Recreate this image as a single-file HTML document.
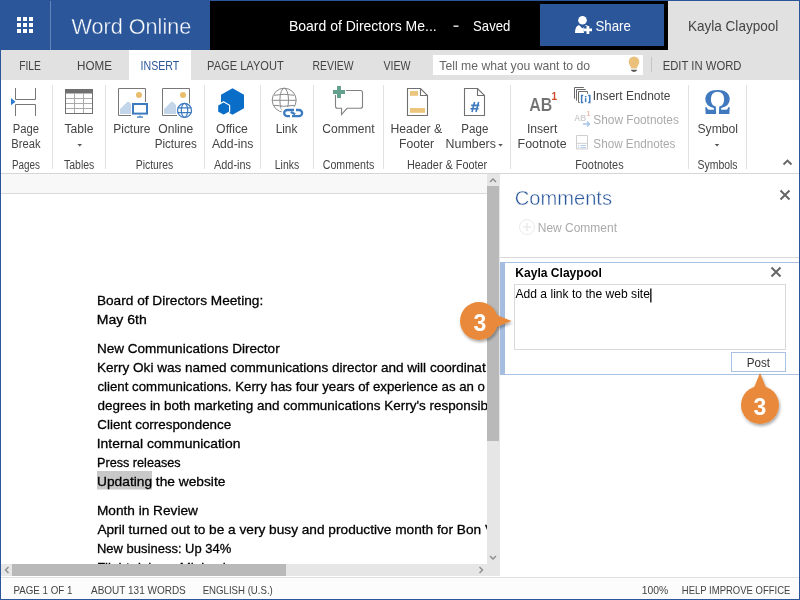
<!DOCTYPE html>
<html><head><meta charset="utf-8"><style>
html,body{margin:0;padding:0;width:800px;height:600px;overflow:hidden;background:#fff}
svg{display:block;will-change:transform}
text{font-family:"Liberation Sans",sans-serif;white-space:pre}
</style></head><body>
<svg width="800" height="600" viewBox="0 0 800 600">
<defs><clipPath id="doc"><rect x="1" y="194" width="486" height="370"/></clipPath>
<filter id="sh" x="-30%" y="-30%" width="160%" height="160%"><feDropShadow dx="1" dy="2" stdDeviation="1.5" flood-color="#000" flood-opacity="0.35"/></filter>
</defs>
<!-- header -->
<rect x="0" y="0" width="800" height="50" fill="#2b579a"/>
<rect x="210" y="1" width="458" height="49" fill="#000"/>
<rect x="540" y="4" width="124" height="42" fill="#2b579a"/>
<rect x="668" y="1" width="131" height="49" fill="#e1e1e1"/>
<g fill="#fff">
<rect x="17" y="17" width="4" height="4"/><rect x="23" y="17" width="4" height="4"/><rect x="29" y="17" width="4" height="4"/>
<rect x="17" y="23" width="4" height="4"/><rect x="23" y="23" width="4" height="4"/><rect x="29" y="23" width="4" height="4"/>
<rect x="17" y="29" width="4" height="4"/><rect x="23" y="29" width="4" height="4"/><rect x="29" y="29" width="4" height="4"/>
</g>
<rect x="50" y="1" width="1" height="49" fill="#6384bb"/>
<rect x="453.5" y="25.5" width="5" height="1.3" fill="#fff"/>
<!-- share person icon -->
<circle cx="582.5" cy="20.3" r="4.3" fill="#fff"/>
<path d="M575 32.8 C575 28.5 576.3 25.8 579 25 L582.5 28.6 L586 25 C587.5 25.4 588.6 26.5 589 28 L588 33 H575 Z" fill="#fff"/>
<path d="M586.6 26 V34 M583.8 29.9 H592" stroke="#2b579a" stroke-width="5"/>
<path d="M587.9 26 V34 M583.8 29.9 H592" stroke="#fff" stroke-width="2.7"/>
<!-- tab bar -->
<rect x="1" y="50" width="798" height="30" fill="#e1e1e1"/>
<rect x="129" y="50" width="62" height="30" fill="#fff"/>
<rect x="433" y="55" width="210" height="20" fill="#fff"/>
<g fill="#eac07a"><circle cx="634" cy="61.8" r="5.3"/><path d="M629.6 64.6 L638.4 64.6 L636.6 68.6 L631.4 68.6 Z"/></g>
<path d="M630.8 69.8 H637.2 Q636.8 71.9 634 71.9 Q631.2 71.9 630.8 69.8 Z" fill="#555"/>
<rect x="651" y="57" width="1" height="15" fill="#c6c6c6"/>
<!-- ribbon -->
<rect x="1" y="80" width="798" height="93" fill="#fff"/>
<rect x="1" y="173" width="798" height="1" fill="#d6d6d6"/>
<g fill="#e1e1e1">
<rect x="52" y="85" width="1" height="84"/><rect x="105" y="85" width="1" height="84"/><rect x="204" y="85" width="1" height="84"/>
<rect x="260" y="85" width="1" height="84"/><rect x="313" y="85" width="1" height="84"/><rect x="383" y="85" width="1" height="84"/>
<rect x="510" y="85" width="1" height="84"/><rect x="688" y="85" width="1" height="84"/><rect x="746" y="85" width="1" height="84"/>
</g>
<!-- page break icon -->
<g fill="none" stroke="#777" stroke-width="1">
<path d="M15.5 88 V99.5 H35.5 V88"/><path d="M15.5 116 V104.5 H35.5 V116"/>
</g>
<path d="M11 98 L15.5 101.7 L11 105.3 Z" fill="#2b7bd0"/>
<!-- table icon -->
<rect x="65.5" y="89.5" width="27" height="24" fill="none" stroke="#707070"/>
<rect x="65" y="89" width="28" height="4.5" fill="#707070"/>
<g stroke="#aaa" stroke-width="1"><path d="M74.5 93.5 V113 M83.5 93.5 V113 M66 98.5 H92 M66 103.5 H92 M66 108.5 H92"/></g>
<path d="M77.5 144 H82 L79.75 146.5 Z" fill="#555"/>
<!-- picture icon -->
<path d="M118.5 115.5 V88.5 H145.5 V102 M118.5 115.5 H131" fill="none" stroke="#777"/>
<circle cx="139" cy="95" r="3" fill="#e9bd6c"/>
<path d="M120 114 V109 L127.5 101.8 L128.8 101.8 L131 104 V114 Z" fill="#c3d5e9"/>
<rect x="133" y="104" width="14" height="9.6" fill="#fff" stroke="#3d7bbf" stroke-width="2"/>
<rect x="137" y="116.4" width="6" height="1.3" fill="#3d7bbf"/><rect x="139.3" y="115.6" width="1.4" height="1" fill="#3d7bbf"/>
<!-- online pictures icon -->
<path d="M162.5 115.5 V88.5 H189.5 V103.5 M162.5 115.5 H177" fill="none" stroke="#777"/>
<circle cx="183" cy="95" r="3" fill="#e9bd6c"/>
<path d="M164 114 V109 L171.5 101.8 L172.8 101.8 L176 105 V114 Z" fill="#c3d5e9"/>
<circle cx="184.5" cy="110.4" r="7" fill="#fff" stroke="#3d7bbf" stroke-width="1.3"/>
<path d="M177.5 107.8 H191.5 M177.5 112.6 H191.5" stroke="#3d7bbf" stroke-width="1.2" fill="none"/>
<ellipse cx="184.5" cy="110.4" rx="3.2" ry="7" fill="none" stroke="#3d7bbf" stroke-width="1.2"/>
<!-- office add-ins -->
<path d="M232.5 88.3 L244 94.8 V108.3 L232.5 114.8 L221 108.3 V94.8 Z" fill="#0a6ec8"/>
<path d="M223.6 101.8 L229.6 105.3 V111.9 L223.6 115.3 L217.6 111.9 V105.3 Z" fill="#0a6ec8" stroke="#fff" stroke-width="1.2"/>
<!-- link globe -->
<g fill="none" stroke="#8a8a8a" stroke-width="1">
<circle cx="284.2" cy="100.2" r="12"/>
<ellipse cx="284.2" cy="100.2" rx="4.3" ry="12"/>
<path d="M272.2 100.3 H296.2 M274 95.3 Q284.2 93.3 294.4 95.3 M274 105.3 Q284.2 107.3 294.4 105.3"/>
</g>
<path d="M281.5 107 H304 V119 H281.5 Z" fill="#fff"/>
<g fill="none" stroke="#3d7bbf" stroke-width="2.3">
<path d="M294 110 H287.3 A3.1 3.1 0 0 0 287.3 116.2 H290"/>
<path d="M296 110 H299 A3.1 3.1 0 0 1 299 116.2 H292"/>
<path d="M290.8 112 L295.2 114.2"/>
</g>
<!-- comment icon -->
<path d="M346 90.5 H360.5 Q362.5 90.5 362.5 92.5 V106.3 Q362.5 108.3 360.5 108.3 H347 L341.5 114.5 V108.3 H337.5 Q335.5 108.3 335.5 106.3 V95" fill="none" stroke="#808080" stroke-width="1.1"/>
<path d="M337 86 H341 V90 H345 V94 H341 V98 H337 V94 H333 V90 H337 Z" fill="#64a08e"/>
<!-- header & footer -->
<path d="M407.5 88.5 H420.5 L427.5 95.5 V115.5 H407.5 Z M420.5 88.5 V95.5 H427.5" fill="none" stroke="#707070" stroke-width="1.1"/>
<rect x="410" y="91" width="8" height="4.8" fill="#ecc57c"/>
<rect x="410" y="108" width="15" height="4.8" fill="#ecc57c"/>
<!-- page numbers -->
<path d="M464.5 88.5 H477.5 L484.5 95.5 V115.5 H464.5 Z M477.5 88.5 V95.5 H484.5" fill="none" stroke="#707070" stroke-width="1.1"/>
<path d="M474.6 102 L472 112 M478.6 102 L476 112 M471.2 105.4 H479.3 M470.4 108.8 H478.5" fill="none" stroke="#3d7bbf" stroke-width="1.6"/>
<path d="M498.2 144 H502.8 L500.5 146.5 Z" fill="#555"/>
<!-- AB1 -->
<text x="529.3" y="110.7" font-size="18.5" font-weight="bold" fill="#707070" textLength="23" lengthAdjust="spacingAndGlyphs" stroke="#fff" stroke-width="0.2">AB</text>
<text x="551.5" y="99.8" font-size="10" font-weight="bold" fill="#d04a2a">1</text>
<!-- insert endnote icon -->
<g fill="none" stroke="#6a6a6a" stroke-width="1">
<path d="M574.5 98.7 V87.5 H583.8"/><path d="M576.5 100.7 V89.5 H585.8"/><path d="M579.8 102.5 H578.5 V91.5 H587.5 V93.8"/>
</g>
<g fill="none" stroke="#3d7bbf" stroke-width="1.5">
<path d="M583.2 95.6 H581.6 V102.4 H583.2"/><path d="M588.2 95.6 H589.8 V102.4 H588.2"/>
</g>
<rect x="584.9" y="96" width="1.5" height="1.4" fill="#3d7bbf"/><rect x="584.9" y="98.2" width="1.5" height="3.8" fill="#3d7bbf"/>
<!-- show footnotes (disabled) -->
<text x="574.2" y="121.2" font-size="9.4" font-weight="bold" fill="#d0d0d0" textLength="12" lengthAdjust="spacingAndGlyphs">AB</text>
<text x="586.8" y="115.8" font-size="6.3" font-weight="bold" fill="#f0b4a4">1</text>
<path d="M583 124 H589.5 M587 121.5 L589.5 124 L587 126.5" fill="none" stroke="#a8c4e6" stroke-width="1.4"/>
<!-- show endnotes (disabled) -->
<path d="M576.5 135.5 H587.5 V149 H576.5 Z M576.5 143.3 H587.5" fill="none" stroke="#cfcfcf"/>
<path d="M580.5 145.6 H586 M580.5 147.6 H586 M578 145.6 H579 M578 147.6 H579" stroke="#a8c4e6" stroke-width="0.9"/>
<!-- omega -->
<text x="717.4" y="114" font-size="36" style="font-family:'Liberation Serif',serif" font-weight="bold" fill="#4079bd" text-anchor="middle" textLength="27.5" lengthAdjust="spacingAndGlyphs">Ω</text>
<path d="M714.7 144 H719.3 L717 146.5 Z" fill="#555"/>
<path d="M783.5 164.5 L787.5 160.5 L791.5 164.5" fill="none" stroke="#666" stroke-width="1.9"/>
<!-- doc area -->
<rect x="1" y="174" width="486" height="19" fill="#f8f8f8"/>
<rect x="1" y="193" width="486" height="1" fill="#dadada"/>
<rect x="487" y="174" width="13" height="390" fill="#e6e6e6"/>
<rect x="487" y="186" width="12" height="255" fill="#b9b9b9"/>
<path d="M490 182 L493 179 L496 182" fill="none" stroke="#8c8c8c" stroke-width="1.4"/>
<path d="M490 556 L493 559 L496 556" fill="none" stroke="#8c8c8c" stroke-width="1.4"/>
<rect x="1" y="564" width="499" height="12" fill="#e6e6e6"/>
<rect x="12" y="564" width="274" height="12" fill="#b9b9b9"/>
<path d="M8.5 567 L5.5 570 L8.5 573" fill="none" stroke="#8c8c8c" stroke-width="1.4"/>
<path d="M479.5 567 L482.5 570 L479.5 573" fill="none" stroke="#8c8c8c" stroke-width="1.4"/>
<!-- highlight -->
<rect x="97" y="471" width="55" height="18.5" fill="#c8c8c8"/>
<!-- status bar -->
<rect x="1" y="577" width="798" height="1" fill="#e0e0e0"/>
<rect x="1" y="578" width="798" height="21" fill="#fcfcfc"/>
<!-- panel -->
<rect x="500" y="257" width="299" height="1" fill="#d9d9d9"/>
<rect x="500" y="262" width="299" height="1" fill="#a9c1e3"/>
<rect x="500" y="374" width="299" height="1" fill="#a9c1e3"/>
<rect x="500" y="262" width="5" height="113" fill="#a4bde0"/>
<rect x="514.5" y="284.5" width="271" height="65" fill="#fff" stroke="#d9d9d9"/>
<rect x="650" y="288.5" width="1.6" height="14" fill="#333"/>
<rect x="731.5" y="352.5" width="54" height="19" fill="#fff" stroke="#a9c1e3"/>
<g stroke="#666" stroke-width="2"><path d="M771.5 267.5 L780.5 276.5 M780.5 267.5 L771.5 276.5"/></g>
<g stroke="#666" stroke-width="2"><path d="M780.5 190.5 L789.5 199.5 M789.5 190.5 L780.5 199.5"/></g>
<circle cx="527" cy="227" r="7.5" fill="none" stroke="#eaeaea" stroke-width="1"/>
<path d="M527 223 V231 M523 227 H531" stroke="#ececec" stroke-width="1.6"/>
<!-- window border -->
<rect x="0.5" y="0.5" width="799" height="599" fill="none" stroke="#2b579a"/>

<text x="71.50" y="34" font-size="22.5" fill="#fff" font-weight="normal" textLength="119.78" lengthAdjust="spacingAndGlyphs" stroke="#2b579a" stroke-width="0.4">Word Online</text>
<text x="288.88" y="31" font-size="15" fill="#fff" font-weight="normal" textLength="147.85" lengthAdjust="spacingAndGlyphs">Board of Directors Me...</text>
<text x="473.07" y="31" font-size="15" fill="#fff" font-weight="normal" textLength="37.26" lengthAdjust="spacingAndGlyphs">Saved</text>
<text x="595.47" y="31" font-size="15" fill="#fff" font-weight="normal" textLength="35.41" lengthAdjust="spacingAndGlyphs">Share</text>
<text x="687.92" y="31" font-size="14.5" fill="#444" font-weight="normal" textLength="90.43" lengthAdjust="spacingAndGlyphs">Kayla Claypool</text>
<text x="19.18" y="70" font-size="13" fill="#444" font-weight="normal" textLength="21.70" lengthAdjust="spacingAndGlyphs">FILE</text>
<text x="77.07" y="70" font-size="13" fill="#444" font-weight="normal" textLength="34.96" lengthAdjust="spacingAndGlyphs">HOME</text>
<text x="207.11" y="70" font-size="13" fill="#444" font-weight="normal" textLength="76.62" lengthAdjust="spacingAndGlyphs">PAGE LAYOUT</text>
<text x="312.57" y="70" font-size="13" fill="#444" font-weight="normal" textLength="40.97" lengthAdjust="spacingAndGlyphs">REVIEW</text>
<text x="383.40" y="70" font-size="13" fill="#444" font-weight="normal" textLength="27.13" lengthAdjust="spacingAndGlyphs">VIEW</text>
<text x="662.70" y="70" font-size="13" fill="#444" font-weight="normal" textLength="78.77" lengthAdjust="spacingAndGlyphs">EDIT IN WORD</text>
<text x="140.55" y="70" font-size="13" fill="#2b579a" font-weight="normal" textLength="38.67" lengthAdjust="spacingAndGlyphs">INSERT</text>
<text x="439.36" y="70" font-size="13" fill="#666" font-weight="normal" textLength="150.69" lengthAdjust="spacingAndGlyphs">Tell me what you want to do</text>
<text x="12.80" y="133" font-size="12" fill="#444" font-weight="normal" textLength="26.31" lengthAdjust="spacingAndGlyphs">Page</text>
<text x="11.30" y="147.5" font-size="12" fill="#444" font-weight="normal" textLength="29.28" lengthAdjust="spacingAndGlyphs">Break</text>
<text x="11.91" y="168.6" font-size="12" fill="#444" font-weight="normal" textLength="27.99" lengthAdjust="spacingAndGlyphs">Pages</text>
<text x="64.46" y="133" font-size="12" fill="#444" font-weight="normal" textLength="28.98" lengthAdjust="spacingAndGlyphs">Table</text>
<text x="63.99" y="168.6" font-size="12" fill="#444" font-weight="normal" textLength="30.32" lengthAdjust="spacingAndGlyphs">Tables</text>
<text x="113.24" y="133" font-size="12" fill="#444" font-weight="normal" textLength="37.29" lengthAdjust="spacingAndGlyphs">Picture</text>
<text x="158.32" y="133" font-size="12" fill="#444" font-weight="normal" textLength="34.92" lengthAdjust="spacingAndGlyphs">Online</text>
<text x="154.67" y="147.5" font-size="12" fill="#444" font-weight="normal" textLength="42.18" lengthAdjust="spacingAndGlyphs">Pictures</text>
<text x="135.77" y="168.6" font-size="12" fill="#444" font-weight="normal" textLength="37.54" lengthAdjust="spacingAndGlyphs">Pictures</text>
<text x="216.11" y="133" font-size="12" fill="#444" font-weight="normal" textLength="31.83" lengthAdjust="spacingAndGlyphs">Office</text>
<text x="211.90" y="147.5" font-size="12" fill="#444" font-weight="normal" textLength="41.47" lengthAdjust="spacingAndGlyphs">Add-ins</text>
<text x="214.00" y="168.6" font-size="12" fill="#444" font-weight="normal" textLength="36.93" lengthAdjust="spacingAndGlyphs">Add-ins</text>
<text x="275.65" y="133" font-size="12" fill="#444" font-weight="normal" textLength="21.73" lengthAdjust="spacingAndGlyphs">Link</text>
<text x="274.77" y="168.6" font-size="12" fill="#444" font-weight="normal" textLength="24.35" lengthAdjust="spacingAndGlyphs">Links</text>
<text x="322.19" y="133" font-size="12" fill="#444" font-weight="normal" textLength="52.48" lengthAdjust="spacingAndGlyphs">Comment</text>
<text x="322.77" y="168.6" font-size="12" fill="#444" font-weight="normal" textLength="51.45" lengthAdjust="spacingAndGlyphs">Comments</text>
<text x="390.52" y="133" font-size="12" fill="#444" font-weight="normal" textLength="51.56" lengthAdjust="spacingAndGlyphs">Header &amp;</text>
<text x="399.03" y="147.5" font-size="12" fill="#444" font-weight="normal" textLength="35.13" lengthAdjust="spacingAndGlyphs">Footer</text>
<text x="461.37" y="133" font-size="12" fill="#444" font-weight="normal" textLength="27.05" lengthAdjust="spacingAndGlyphs">Page</text>
<text x="445.61" y="147.5" font-size="12" fill="#444" font-weight="normal" textLength="50.26" lengthAdjust="spacingAndGlyphs">Numbers</text>
<text x="406.93" y="168.6" font-size="12" fill="#444" font-weight="normal" textLength="80.21" lengthAdjust="spacingAndGlyphs">Header &amp; Footer</text>
<text x="526.91" y="133" font-size="12" fill="#444" font-weight="normal" textLength="30.37" lengthAdjust="spacingAndGlyphs">Insert</text>
<text x="517.60" y="147.5" font-size="12" fill="#444" font-weight="normal" textLength="49.15" lengthAdjust="spacingAndGlyphs">Footnote</text>
<text x="575.13" y="168.6" font-size="12" fill="#444" font-weight="normal" textLength="48.50" lengthAdjust="spacingAndGlyphs">Footnotes</text>
<text x="697.41" y="133" font-size="12" fill="#444" font-weight="normal" textLength="40.65" lengthAdjust="spacingAndGlyphs">Symbol</text>
<text x="697.48" y="168.6" font-size="12" fill="#444" font-weight="normal" textLength="40.13" lengthAdjust="spacingAndGlyphs">Symbols</text>
<text x="592.72" y="99.8" font-size="12" fill="#444" font-weight="normal" textLength="77.71" lengthAdjust="spacingAndGlyphs">Insert Endnote</text>
<text x="593.33" y="124" font-size="12" fill="#aaa" font-weight="normal" textLength="85.53" lengthAdjust="spacingAndGlyphs">Show Footnotes</text>
<text x="593.33" y="148" font-size="12" fill="#aaa" font-weight="normal" textLength="81.92" lengthAdjust="spacingAndGlyphs">Show Endnotes</text>
<text x="96.91" y="305" font-size="13.6" fill="#000" font-weight="normal" textLength="166.29" lengthAdjust="spacingAndGlyphs" clip-path="url(#doc)" stroke="#000" stroke-width="0.3">Board of Directors Meeting:</text>
<text x="96.88" y="324" font-size="13.6" fill="#000" font-weight="normal" textLength="49.91" lengthAdjust="spacingAndGlyphs" clip-path="url(#doc)" stroke="#000" stroke-width="0.3">May 6th</text>
<text x="96.92" y="353" font-size="13.6" fill="#000" font-weight="normal" textLength="182.76" lengthAdjust="spacingAndGlyphs" clip-path="url(#doc)" stroke="#000" stroke-width="0.3">New Communications Director</text>
<text x="96.92" y="372" font-size="13.6" fill="#000" font-weight="normal" textLength="388.76" lengthAdjust="spacingAndGlyphs" clip-path="url(#doc)" stroke="#000" stroke-width="0.3">Kerry Oki was named communications director and will coordinat</text>
<text x="97.47" y="391" font-size="13.6" fill="#000" font-weight="normal" textLength="387.52" lengthAdjust="spacingAndGlyphs" clip-path="url(#doc)" stroke="#000" stroke-width="0.3">client communications. Kerry has four years of experience as an o</text>
<text x="97.46" y="410" font-size="13.6" fill="#000" font-weight="normal" textLength="393.45" lengthAdjust="spacingAndGlyphs" clip-path="url(#doc)" stroke="#000" stroke-width="0.3">degrees in both marketing and communications Kerry's responsibi</text>
<text x="97.33" y="429" font-size="13.6" fill="#000" font-weight="normal" textLength="133.85" lengthAdjust="spacingAndGlyphs" clip-path="url(#doc)" stroke="#000" stroke-width="0.3">Client correspondence</text>
<text x="96.75" y="448" font-size="13.6" fill="#000" font-weight="normal" textLength="143.63" lengthAdjust="spacingAndGlyphs" clip-path="url(#doc)" stroke="#000" stroke-width="0.3">Internal communication</text>
<text x="96.99" y="467" font-size="13.6" fill="#000" font-weight="normal" textLength="83.69" lengthAdjust="spacingAndGlyphs" clip-path="url(#doc)" stroke="#000" stroke-width="0.3">Press releases</text>
<text x="97.04" y="486" font-size="13.6" fill="#000" font-weight="normal" textLength="128.36" lengthAdjust="spacingAndGlyphs" clip-path="url(#doc)" stroke="#000" stroke-width="0.3">Updating the website</text>
<text x="96.91" y="515" font-size="13.6" fill="#000" font-weight="normal" textLength="100.99" lengthAdjust="spacingAndGlyphs" clip-path="url(#doc)" stroke="#000" stroke-width="0.3">Month in Review</text>
<text x="97.40" y="534" font-size="13.6" fill="#000" font-weight="normal" textLength="433.10" lengthAdjust="spacingAndGlyphs" clip-path="url(#doc)" stroke="#000" stroke-width="0.3">April turned out to be a very busy and productive month for Bon Voyage</text>
<text x="96.96" y="553" font-size="13.6" fill="#000" font-weight="normal" textLength="134.42" lengthAdjust="spacingAndGlyphs" clip-path="url(#doc)" stroke="#000" stroke-width="0.3">New business: Up 34%</text>
<text x="96.93" y="572" font-size="13.6" fill="#000" font-weight="normal" textLength="128.91" lengthAdjust="spacingAndGlyphs" clip-path="url(#doc)" stroke="#000" stroke-width="0.3">Flight delays: Minimal</text>
<text x="514.79" y="204.7" font-size="20" fill="#2b579a" font-weight="normal" textLength="97.21" lengthAdjust="spacingAndGlyphs" stroke="#fff" stroke-width="0.4">Comments</text>
<text x="537.74" y="231.7" font-size="12" fill="#aaa" font-weight="normal" textLength="79.23" lengthAdjust="spacingAndGlyphs">New Comment</text>
<text x="515.28" y="276.7" font-size="12" fill="#000" font-weight="bold" textLength="86.54" lengthAdjust="spacingAndGlyphs">Kayla Claypool</text>
<text x="515.50" y="297.7" font-size="12.5" fill="#000" font-weight="normal" textLength="134.44" lengthAdjust="spacingAndGlyphs">Add a link to the web site</text>
<text x="746.67" y="367" font-size="12" fill="#333" font-weight="normal" textLength="23.31" lengthAdjust="spacingAndGlyphs">Post</text>
<text x="13.42" y="594" font-size="11.5" fill="#444" font-weight="normal" textLength="59.03" lengthAdjust="spacingAndGlyphs">PAGE 1 OF 1</text>
<text x="91.00" y="594" font-size="11.5" fill="#444" font-weight="normal" textLength="94.77" lengthAdjust="spacingAndGlyphs">ABOUT 131 WORDS</text>
<text x="202.63" y="594" font-size="11.5" fill="#444" font-weight="normal" textLength="70.18" lengthAdjust="spacingAndGlyphs">ENGLISH (U.S.)</text>
<text x="641.77" y="594" font-size="11.5" fill="#444" font-weight="normal" textLength="26.53" lengthAdjust="spacingAndGlyphs">100%</text>
<text x="681.84" y="594" font-size="11.5" fill="#444" font-weight="normal" textLength="108.51" lengthAdjust="spacingAndGlyphs">HELP IMPROVE OFFICE</text>
<g filter="url(#sh)" fill="#e8893a">
<circle cx="479" cy="321" r="19"/>
<path d="M494 314 L511.5 321 L494 328 Z"/>
</g>
<text x="480" y="331" font-size="23" font-weight="bold" fill="#fff" text-anchor="middle">3</text>
<g filter="url(#sh)" fill="#e8893a">
<circle cx="760" cy="405" r="19"/>
<path d="M753 390 L760 373 L767 390 Z"/>
</g>
<text x="760" y="414.5" font-size="23" font-weight="bold" fill="#fff" text-anchor="middle">3</text>

</svg>
</body></html>
